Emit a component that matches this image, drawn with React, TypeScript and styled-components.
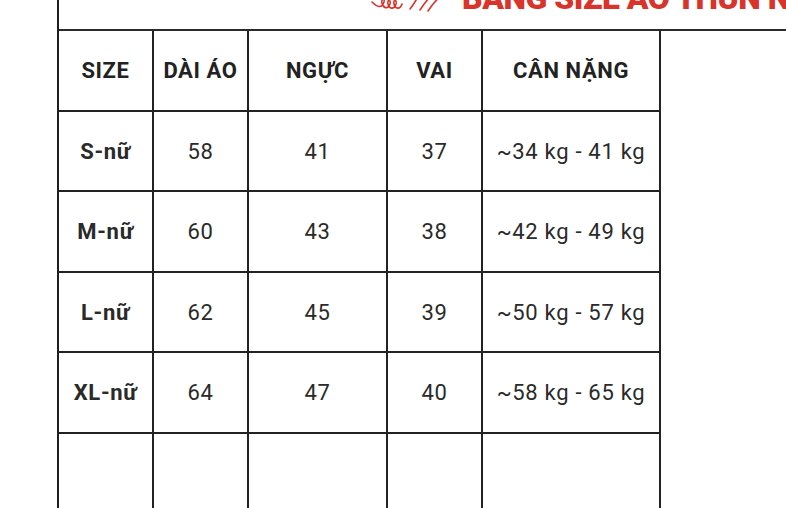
import styled, { createGlobalStyle } from "styled-components"

const GlobalStyle = createGlobalStyle`
  html, body {
    margin: 0;
    padding: 0;
    background: #fff;
    overflow: hidden;
  }
  body {
    font-family: Roboto, "Noto Sans", sans-serif;
    color: #222;
  }
`

const headers = ["SIZE", "DÀI ÁO", "NGỰC", "VAI", "CÂN NẶNG"]

const rows = [
  ["S-nữ", "58", "41", "37", "~34 kg - 41 kg"],
  ["M-nữ", "60", "43", "38", "~42 kg - 49 kg"],
  ["L-nữ", "62", "45", "39", "~50 kg - 57 kg"],
  ["XL-nữ", "64", "47", "40", "~58 kg - 65 kg"],
  ["", "", "", "", ""],
]

export default function App() {
  return (
    <>
      <GlobalStyle />
      <Frame>
        <TitleBar>
          <Flourish width="72" height="16" viewBox="0 0 72 16">
            <path
              d="M2 5 C 8 11, 12 11, 14 5 C 15 1, 11 1, 12 6 C 13 11, 18 13, 20 7 C 21 2, 17 2, 18 7 C 19 12, 24 13, 26 7 C 27 2, 23 2, 24 7 C 25 12, 30 13, 32 7 M 40 12 C 44 7, 46 3, 48 0 M 50 13 C 54 7, 57 3, 60 0 M 58 14 C 62 8, 66 3, 70 0"
              fill="none"
              stroke="#d8342c"
              strokeWidth="1.6"
              strokeLinecap="round"
            />
          </Flourish>
          <Title>BẢNG SIZE ÁO THUN NỮ</Title>
        </TitleBar>
        <Grid>
          {headers.map((h) => (
            <HeadCell key={h}>{h}</HeadCell>
          ))}
          {rows.map((r, i) =>
            r.map((v, j) => (
              <Cell key={`${i}-${j}`} bold={j === 0}>
                {v}
              </Cell>
            ))
          )}
        </Grid>
      </Frame>
    </>
  )
}

const Frame = styled.div`
  margin-left: 57px;
  border-left: 2px solid #1e1e1e;
  height: 508px;
`

const TitleBar = styled.div`
  height: 29px;
  border-bottom: 2px solid #2a2a2a;
  display: flex;
  align-items: flex-end;
  overflow: hidden;
  padding-left: 311px;
`

const Flourish = styled.svg`
  flex: none;
  align-self: flex-start;
  margin-top: -3px;
  margin-right: 20px;
`

const Title = styled.h1`
  flex: none;
  margin: 0 0 15px 0;
  font-family: Roboto, "Noto Sans", sans-serif;
  font-weight: 900;
  font-size: 32px;
  line-height: 32px;
  color: #d8342c;
  white-space: nowrap;
  letter-spacing: -0.5px;
`

const Grid = styled.div`
  display: grid;
  grid-template-columns: 95px 95px 139px 95px 178px;
  grid-auto-rows: 80.5px;
`

const HeadCell = styled.div`
  box-sizing: border-box;
  border-right: 2px solid #222;
  border-bottom: 2px solid #222;
  display: flex;
  align-items: center;
  justify-content: center;
  font-weight: 700;
  font-size: 22px;
  letter-spacing: 0.6px;
  color: #222;
  padding-top: 1px;
  white-space: nowrap;
`

const Cell = styled.div<{ bold: boolean }>`
  box-sizing: border-box;
  border-right: 2px solid #222;
  border-bottom: 2px solid #222;
  display: flex;
  align-items: center;
  justify-content: center;
  font-weight: ${(p) => (p.bold ? 700 : 400)};
  font-size: 22px;
  letter-spacing: 0.7px;
  color: #2a2a2a;
  padding-top: 1px;
  white-space: nowrap;
`
